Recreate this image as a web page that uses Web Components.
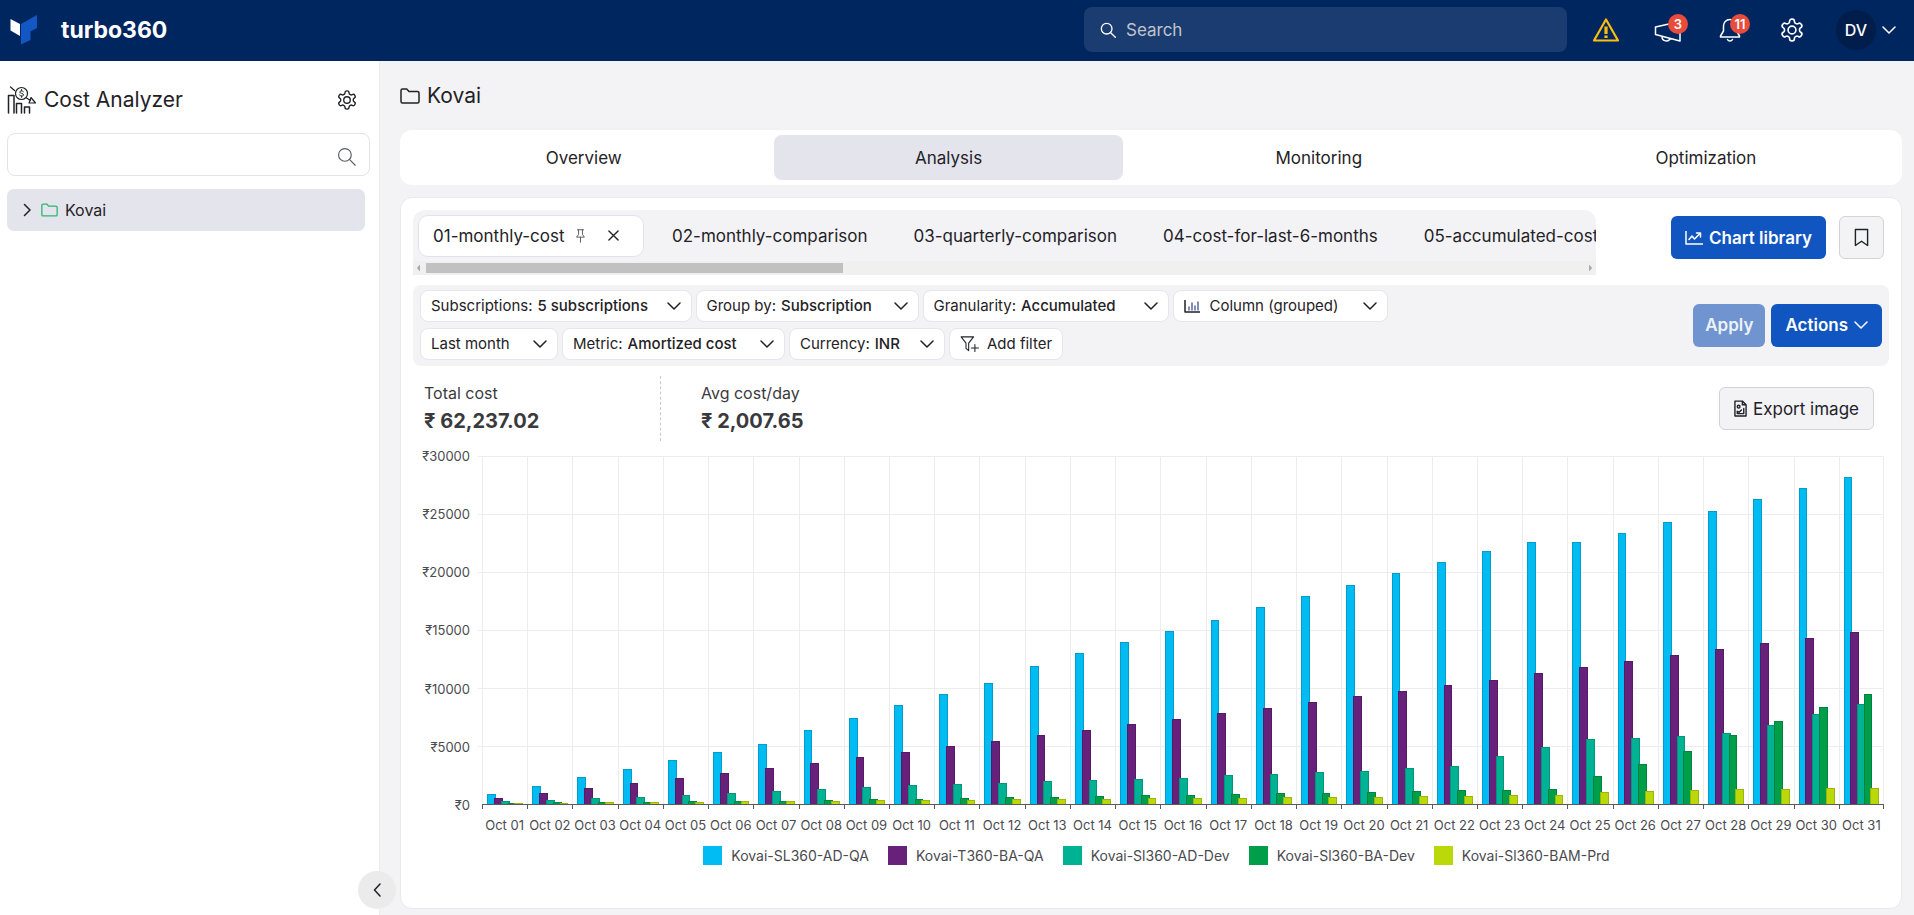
<!DOCTYPE html>
<html lang="en">
<head>
<meta charset="utf-8">
<title>Cost Analyzer - turbo360</title>
<style>
  body {
    margin: 0;
    background: #f3f3f6;
    color: #1f2226;
    font: 16px/24px Inter, "Noto Sans", sans-serif;
  }
</style>
</head>
<body>
<app-shell>
  <top-bar slot="header"></top-bar>
  <side-panel slot="aside"></side-panel>
  <page-heading>Kovai</page-heading>
  <page-tabs></page-tabs>
  <analysis-panel></analysis-panel>
</app-shell>

<script>
/* Base class: renders the markup returned by render() into an open root. */
class BaseElement extends HTMLElement {
  connectedCallback() {
    if (this.shadowRoot) return;
    const root = this.attachShadow({ mode: "open" });
    const template = document.createElement("template");
    template.innerHTML = `<style>
      :host, *, *::before, *::after { box-sizing: border-box; }
      button, input, select { font: inherit; color: inherit; }
      button { border: 0; padding: 0; background: none; cursor: pointer; }
    </style>` + this.render();
    root.append(template.content.cloneNode(true));
  }
}

const ICONS = {
  logo: ["0 0 27 30", `<path d="M.5 4 10 9v12L.5 15.500z" fill="#fff"/><path d="M11 9 27 0v13l-6.500 3.500V25L11 29.500z" fill="#1357c4"/>`],
  search: ["0 0 24 24", `<circle cx="10" cy="10" r="8"/><path d="m16 16 7 7"/>`],
  warning: ["0 0 28 26", `<path d="M14 2.500 26 23.500H2z" stroke="#fdbf0f" stroke-width="2.200"/><path d="M14 9.500v7.500M14 18.500v2.500" stroke="#fdbf0f" stroke-width="3.200" stroke-linecap="butt"/>`],
  megaphone: ["0 0 28 24", `<path d="M1.500 9v7.500L26 23V3.500zM8 18.500c0 5.500 7 5.500 8 2"/>`],
  bell: ["0 0 22 24", `<path d="M11 1.500c-4 0-6.500 3-6.500 6.500v5L1.500 18v1h19v-1l-3-5V8c0-3.500-2.500-6.500-6.500-6.500zM8.500 21.500c1 2 4 2 5 0"/>`],
  gear: ["1 1 22 22", `<path d="M12.22 2h-.44a2 2 0 0 0-2 2v.18a2 2 0 0 1-1 1.730l-.43.25a2 2 0 0 1-2 0l-.15-.08a2 2 0 0 0-2.730.73l-.22.38a2 2 0 0 0 .73 2.730l.15.1a2 2 0 0 1 1 1.720v.51a2 2 0 0 1-1 1.740l-.15.09a2 2 0 0 0-.73 2.730l.22.38a2 2 0 0 0 2.730.73l.15-.08a2 2 0 0 1 2 0l.43.25a2 2 0 0 1 1 1.730V20a2 2 0 0 0 2 2h.44a2 2 0 0 0 2-2v-.18a2 2 0 0 1 1-1.730l.43-.25a2 2 0 0 1 2 0l.15.08a2 2 0 0 0 2.730-.73l.22-.39a2 2 0 0 0-.73-2.730l-.15-.08a2 2 0 0 1-1-1.740v-.5a2 2 0 0 1 1-1.740l.15-.09a2 2 0 0 0 .73-2.730l-.22-.38a2 2 0 0 0-2.730-.73l-.15.08a2 2 0 0 1-2 0l-.43-.25a2 2 0 0 1-1-1.730V4a2 2 0 0 0-2-2z"/><circle cx="12" cy="12" r="3.600"/>`],
  down: ["0 0 14 8", `<path d="m1 1 6 6 6-6"/>`],
  right: ["0 0 8 14", `<path d="m1.500 1.500 5.500 5.500-5.500 5.500"/>`],
  left: ["0 0 8 14", `<path d="M7 1 1.500 7 7 13"/>`],
  folder: ["0 0 20 16", `<path d="M1 13.500v-11C1 1.500 1.500 1 2.500 1h4.200L9 3.500h8.500c1 0 1.500.5 1.500 1.500v8.500c0 1-.5 1.500-1.500 1.500h-15c-1 0-1.500-.5-1.500-1.500z"/>`],
  cost: ["0 0 30 28", `<path d="M1.500 27V9.500h5.500V27M9.500 27V17.500h5V27M17.500 27v-6h5v6"/><path d="M20.500 7.500a6 6 0 1 1-12 0 6 6 0 0 1 12 0zM3.500 1l4 3.500M19.500 12l4 2.500M24 11.500l4.500 5.500h-6.500z" stroke-width="1.200"/><path d="M16.500 5.700c-.6-1.200-3.800-1.200-3.800.4 0 1.500 3.900 1.100 3.900 2.800 0 1.500-3.500 1.500-4.100.2M14.600 3.500v1M14.600 10.200v1.200" stroke-width="1"/>`],
  pin: ["0 0 14 18", `<path d="M3 1h8M4.500 1v6L2 10.500h10L9.500 7V1M7 10.500V17"/>`],
  close: ["0 0 12 12", `<path d="m1 1 10 10M11 1 1 11"/>`],
  trend: ["0 0 18 14", `<path d="M1 0v13h17M4 8.500l3-3.500 2.500 3L15 2.500M11.500 2H15.500v4"/>`],
  bookmark: ["0 0 16 20", `<path d="M1.500 1.500h13v17L8 14l-6.500 4.500z"/>`],
  bars: ["0 0 16 13", `<path d="M1 0v12h15"/><path d="M5 10V7M8 10V3M11 10V6M14 10V2" stroke="#5c6a9a"/>`],
  filter: ["0 0 22 18", `<path d="M1 1h14l-5.500 7v8.500L6.500 14V8zM12.500 13.500h8M16.500 9.500v8"/>`],
  image: ["0 0 14 18", `<path d="M1 1h8l4 4v12H1zM9 1v4h4"/><path d="M6.500 7a1.500 1.500 0 1 1-3 0 1.500 1.500 0 0 1 3 0zM3.500 14.500v-2.500l2 1 2.500-2.500M10.500 9v5.500h-7"/>`]
};

/* <app-icon name="..."> sized by --w / --h, coloured by currentColor. */
customElements.define("app-icon", class extends BaseElement {
  render() {
    const [box, shape] = ICONS[this.getAttribute("name")];
    const [, , w, h] = box.split(" ");
    return `<style>
      :host { display: inline-block; flex: none; width: var(--w, ${w}px); height: var(--h, ${h}px); }
      svg { display: block; width: 100%; height: 100%; fill: none; stroke: currentColor;
            stroke-width: var(--stroke, 1.500); stroke-linejoin: round; stroke-linecap: round; }
      svg [fill^="#"] { stroke: none; }
    </style><svg viewBox="${box}" aria-hidden="true">${shape}</svg>`;
  }
});

customElements.define("app-shell", class extends BaseElement {
  render() {
    return `<style>
      :host { display: flex; flex-direction: column; min-height: 100vh; }
      .body { flex: 1; display: flex; }
      main { flex: 1; min-width: 0; display: flex; flex-direction: column; padding: 0 12px 6px 20px; }
    </style>
    <slot name="header"></slot>
    <div class="body"><slot name="aside"></slot><main><slot></slot></main></div>`;
  }
});

/* Icon button in the top bar, with an optional count. */
customElements.define("bar-action", class extends BaseElement {
  render() {
    const count = this.getAttribute("count");
    return `<style>
      :host { display: block; width: 62px; }
      button { position: relative; display: grid; place-items: center; width: 100%; height: 44px; }
      span { position: absolute; left: 50%; top: 6px; width: 20px; height: 20px; border-radius: 50%;
             background: #e94b3c; color: #fff; font-size: 13px; line-height: 20px; font-weight: 600; text-align: center; }
    </style>
    <button aria-label="${this.getAttribute("label")}"><slot></slot>${count ? `<span>${count}</span>` : ""}</button>`;
  }
});

customElements.define("top-bar", class extends BaseElement {
  render() {
    return `<style>
      :host { display: block; background: #002660; color: #fff; }
      header { display: flex; align-items: center; height: 61px; padding: 0 18px 2px 10px; }
      .brand { display: flex; align-items: center; gap: 24px; color: inherit; text-decoration: none;
               font-size: 23px; font-weight: 700; }
      .search { flex: 0 1 483px; height: 45px; margin: 0 8px 0 auto; padding: 0 16px; display: flex; align-items: center;
                gap: 8px; border-radius: 8px; background: #1b3c70; }
      .search app-icon { --w: 16px; --h: 16px; --stroke: 2; }
      input { flex: 1; min-width: 0; border: 0; outline: 0; background: none; font-size: 17px; }
      input::placeholder { color: #c0c4cc; opacity: 1; }
      .gear { --w: 24px; --h: 24px; }
      .user { display: flex; align-items: center; gap: 6px; margin-left: 13px; font-weight: 500; }
      .user span { width: 40px; height: 40px; border-radius: 50%; line-height: 40px; background: #001d4c; text-align: center; }
    </style>
    <header>
      <a class="brand" href="#"><app-icon name="logo"></app-icon>turbo360</a>
      <label class="search"><app-icon name="search"></app-icon><input type="text" placeholder="Search" aria-label="Search"></label>
      <bar-action label="Warnings"><app-icon name="warning"></app-icon></bar-action>
      <bar-action label="Announcements" count="3"><app-icon name="megaphone"></app-icon></bar-action>
      <bar-action label="Notifications" count="11"><app-icon name="bell"></app-icon></bar-action>
      <bar-action label="Settings"><app-icon class="gear" name="gear"></app-icon></bar-action>
      <button class="user"><span>DV</span><app-icon name="down"></app-icon></button>
    </header>`;
  }
});

customElements.define("side-panel", class extends BaseElement {
  render() {
    return `<style>
      :host { display: block; position: relative; flex: none; width: 380px; padding: 20px 9px 0 7px;
              background: #fff; border-right: 1px solid #ececef; }
      .title { display: flex; align-items: center; gap: 7px; height: 38px; padding-right: 13px; }
      h1 { flex: 1; margin: 0; font-size: 21px; line-height: 28px; font-weight: 400; }
      .title button { display: grid; }
      .title button app-icon { --w: 20px; --h: 20px; }
      .search { display: flex; align-items: center; height: 43px; margin-top: 14px; padding: 4px 13px 0; border: 1px solid #e4e4e8; border-radius: 8px; }
      .search app-icon { --w: 19px; --h: 19px; color: #5b5f66; }
      input { flex: 1; min-width: 0; border: 0; outline: 0; background: none; }
      .node { display: flex; align-items: center; gap: 7px; width: 358px; max-width: 100%; height: 42px; margin-top: 13px; padding: 0 16px;
              border-radius: 7px; background: #e4e4ec; }
      .folder { --w: 17px; --h: 14px; color: #2cb56e; margin-left: 3px; }
      .toggle { position: absolute; right: -17px; bottom: 6px; width: 38px; height: 38px; border-radius: 50%;
                display: grid; place-items: center; background: #ebebeb; }
    </style>
    <div class="title"><app-icon name="cost"></app-icon><h1>Cost Analyzer</h1>
      <button aria-label="Cost Analyzer settings"><app-icon name="gear"></app-icon></button></div>
    <label class="search"><input type="text" aria-label="Filter folders"><app-icon name="search"></app-icon></label>
    <button class="node"><app-icon name="right"></app-icon><app-icon class="folder" name="folder"></app-icon>Kovai</button>
    <button class="toggle" aria-label="Collapse sidebar"><app-icon name="left"></app-icon></button>`;
  }
});

customElements.define("page-heading", class extends BaseElement {
  render() {
    return `<style>
      :host { display: flex; align-items: center; gap: 7px; height: 69px; }
      h2 { margin: 0; font-size: 21px; line-height: 28px; font-weight: 400; }
    </style><app-icon name="folder"></app-icon><h2><slot></slot></h2>`;
  }
});

customElements.define("page-tabs", class extends BaseElement {
  render() {
    const tabs = ["Overview", "Analysis", "Monitoring", "Optimization"];
    return `<style>
      :host { display: block; }
      nav { display: flex; gap: 12px; padding: 5px; border-radius: 12px; background: #fff; }
      a { flex: 1 1 auto; height: 45px; border-radius: 8px; color: inherit; text-decoration: none; text-align: center;
          font-size: 17px; line-height: 46px; }
      [aria-current] { background: #e4e4ec; }
    </style><nav>${tabs.map(t => `<a href="#"${t === "Analysis" ? ' aria-current="page"' : ""}>${t}</a>`).join("")}</nav>`;
  }
});

/* Button with an optional leading and trailing icon; kind = primary | muted | plain. */
customElements.define("app-button", class extends BaseElement {
  render() {
    return `<style>
      :host { display: block; flex: none; }
      button { display: flex; align-items: center; justify-content: center; gap: 6px; width: 100%; height: 43px; padding: 0 14px;
               border-radius: 6px; font-size: 17px; white-space: nowrap; }
      .primary { background: #1155c0; color: #fff; font-weight: 600; }
      .muted { padding: 0 12px; background: #7094cf; color: #eef2fa; font-weight: 600; }
      .plain { background: #f3f3f6; border: 1px solid #d4d4d8; }
    </style><button class="${this.getAttribute("kind")}" ${this.hasAttribute("label") ? `aria-label="${this.getAttribute("label")}"` : ""}><slot></slot></button>`;
  }
});

customElements.define("view-tabs", class extends BaseElement {
  render() {
    return `<style>
      :host { display: block; min-width: 0; border-radius: 12px 12px 0 0; background: #f3f3f6; overflow: hidden; }
      .tabs { display: flex; align-items: center; gap: 46px; height: 51px; padding: 0 5px; font-size: 17px; overflow: hidden; }
      .tabs > * { flex: none; white-space: nowrap; }
      .active { display: flex; align-items: center; width: 226px; height: 42px; margin-right: -18px; padding: 0 14px;
                border: 1px solid #e2e2ec; border-radius: 10px; background: #fff; }
      .active app-icon { display: block; }
      .active .pin { margin-left: 10px; color: #555; --w: 11px; --h: 14px; --stroke: 1.200; }
      .active .close { margin-left: 22px; --w: 11px; --h: 11px; }
      .bar { display: flex; align-items: center; justify-content: space-between; height: 14px; padding: 0 4px; background: #f0f0f0; }
      .track { flex: 1; margin: 0 6px; }
      .thumb { width: 36%; height: 10px; background: #c1c1c1; }
      .arrow { width: 3px; height: 7px; background: #a8a8a8; clip-path: polygon(0 50%, 100% 0, 100% 100%); }
      .arrow.next { clip-path: polygon(0 0, 100% 50%, 0 100%); }
    </style>
    <div class="tabs">
      <div class="active"><button>01-monthly-cost</button><button class="pin" aria-label="Pin"><app-icon name="pin"></app-icon></button>
        <button class="close" aria-label="Close"><app-icon name="close"></app-icon></button></div>
      <button>02-monthly-comparison</button><button>03-quarterly-comparison</button>
      <button>04-cost-for-last-6-months</button><button>05-accumulated-cost</button>
    </div>
    <div class="bar"><i class="arrow"></i><div class="track"><div class="thumb"></div></div><i class="arrow next"></i></div>`;
  }
});

/* Drop-down filter: label text, then the chosen value in a select. */
customElements.define("filter-chip", class extends BaseElement {
  render() {
    const label = this.getAttribute("label"), icon = this.getAttribute("icon"), value = this.getAttribute("value");
    return `<style>
      :host { display: block; height: 32px; }
      label { display: flex; align-items: center; height: 100%; padding: 0 10px; border: 1px solid #e6e6ea; border-radius: 8px;
              background: #fff; font-size: 15px; white-space: nowrap; }
      label > app-icon { margin-right: 10px; }
      select { flex: 1; appearance: none; border: 0; outline: 0; padding: 0 18px 0 0; background: none; font-weight: ${label ? 500 : 400}; }
      .name { margin-right: 5px; }
      label > app-icon.down { margin: 0; }
    </style>
    <label>${icon ? `<app-icon name="${icon}"></app-icon>` : ""}${label ? `<span class="name">${label}:</span>` : ""}
      <select aria-label="${label || value}"><option>${value}</option></select><app-icon class="down" name="down"></app-icon></label>`;
  }
});

customElements.define("filter-bar", class extends BaseElement {
  render() {
    return `<style>
      :host { display: flex; align-items: center; gap: 6px; padding: 5px 7px 6px; border-radius: 8px; background: #f3f3f6; }
      .chips { flex: 0 1 1000px; display: flex; flex-wrap: wrap; gap: 6px 4px; margin-right: auto; }
      .add { display: flex; align-items: center; gap: 7px; height: 32px; padding: 0 10px; border: 1px solid #e6e6ea; border-radius: 8px;
             background: #fff; font-size: 15px; }
      .add app-icon { --w: 20px; --h: 16px; --stroke: 1.200; }
      .xl { min-width: 271px; } .l { min-width: 246px; } .m { min-width: 223px; } .c { min-width: 215px; } .s { min-width: 156px; } .xs { min-width: 138px; }
    </style>
    <div class="chips">
      <filter-chip class="xl" label="Subscriptions" value="5 subscriptions"></filter-chip>
      <filter-chip class="m" label="Group by" value="Subscription"></filter-chip>
      <filter-chip class="l" label="Granularity" value="Accumulated"></filter-chip>
      <filter-chip class="c" icon="bars" value="Column (grouped)"></filter-chip>
      <filter-chip class="xs" value="Last month"></filter-chip>
      <filter-chip class="m" label="Metric" value="Amortized cost"></filter-chip>
      <filter-chip class="s" label="Currency" value="INR"></filter-chip>
      <button class="add"><app-icon name="filter"></app-icon>Add filter</button>
    </div>
    <app-button kind="muted">Apply</app-button>
    <app-button kind="primary">Actions<app-icon name="down"></app-icon></app-button>`;
  }
});

customElements.define("cost-stat", class extends BaseElement {
  render() {
    return `<style>
      :host { display: block; padding-top: 5px; color: #3a3a3e; }
      span { display: block; font-size: 16px; line-height: 24px; }
      strong { display: block; font-size: 20px; line-height: 32px; }
    </style><span>${this.getAttribute("label")}</span><strong><slot></slot></strong>`;
  }
});

/* Bar heights in chart units: 1046 units span the axis from 0 to 30000. */
const UNITS = 1046;
const SERIES = [
  ["Kovai-SL360-AD-QA", "#00bcf2", [29,55,81,106,131,156,181,222,258,298,332,365,416,454,487,521,554,592,624,657,695,728,761,788,788,816,849,882,916,950,983]],
  ["Kovai-T360-BA-QA", "#68217a", [19,34,48,63,78,94,107,124,141,157,174,190,207,223,240,257,273,290,306,324,340,357,374,393,411,430,448,465,483,500,518]],
  ["Kovai-Sl360-AD-Dev", "#00b294", [8,12,18,22,27,32,38,45,52,57,61,64,68,71,75,79,87,91,96,100,108,114,144,171,194,198,203,215,238,270,302]],
  ["Kovai-Sl360-BA-Dev", "#009e49", [4,5,6,7,8,9,10,12,14,16,18,20,22,24,26,28,30,32,34,36,38,41,43,46,83,121,159,207,249,291,332]],
  ["Kovai-Sl360-BAM-Prd", "#bad80a", [3,4,5,6,7,8,9,10,11,11,12,14,15,16,17,18,19,20,21,22,24,25,27,28,36,39,42,44,46,47,49]]
];

customElements.define("cost-chart", class extends BaseElement {
  render() {
    const days = SERIES[0][2].map((_, i) => i);
    const ticks = [30000, 25000, 20000, 15000, 10000, 5000, 0];
    const bars = d => SERIES.map(([, color, v]) => `<i style="height:${(v[d] / UNITS * 100).toFixed(2)}%;background-color:${color}"></i>`).join("");
    return `<style>
      :host { display: grid; grid-template: minmax(300px, 1fr) auto auto / 57px 1fr; column-gap: 12px; color: #4b4b4f; font-size: 13px; line-height: 18px; }
      .y { display: flex; flex-direction: column; justify-content: space-between; margin: -9px 0; text-align: right; }
      .plot { display: grid; border-bottom: 1px solid #5a5a5e; }
      .plot > * { grid-area: 1 / 1; }
      .lines { display: flex; flex-direction: column; margin-left: -4px; }
      .lines i { flex: 1; border-top: 1px solid #ededee; }
      .days, .x { display: grid; grid-template-columns: repeat(31, minmax(0, 1fr)); }
      .day { position: relative; display: flex; align-items: flex-end; padding: 0 4px 0 6px; border-left: 1px solid #ededee; }
      .day:last-child { border-right: 1px solid #ededee; }
      .day i { flex: 1; margin-left: -2px; border: 1px solid rgba(0, 0, 0, .16); border-bottom: 0; }
      .day::after, .day:last-child::before { content: ""; position: absolute; left: -1px; top: 100%; width: 1px; height: 5px; background: #5a5a5e; }
      .day:last-child::before { left: auto; right: -1px; }
      .x { grid-column: 2; padding-top: 11px; }
      .x span { display: flex; justify-content: center; white-space: nowrap; }
      ul { grid-column: 1 / -1; display: flex; flex-wrap: wrap; justify-content: center; gap: 19px; margin: 12px 0 0; padding: 0 0 0 16px;
           list-style: none; font-size: 14px; line-height: 19px; }
      li { display: flex; gap: 9px; }
      li i { width: 19px; height: 19px; }
    </style>
    <div class="y">${ticks.map(t => `<span>₹${t}</span>`).join("")}</div>
    <div class="plot">
      <div class="lines">${ticks.slice(1).map(() => "<i></i>").join("")}</div>
      <div class="days">${days.map(d => `<div class="day">${bars(d)}</div>`).join("")}</div>
    </div>
    <div class="x">${days.map(d => `<span>Oct ${String(d + 1).padStart(2, "0")}</span>`).join("")}</div>
    <ul>${SERIES.map(([name, color]) => `<li><i style="background:${color}"></i>${name}</li>`).join("")}</ul>`;
  }
});

customElements.define("analysis-panel", class extends BaseElement {
  render() {
    return `<style>
      :host { flex: 1; display: flex; flex-direction: column; margin-top: 12px; padding: 12px 12px 43px;
              border: 1px solid #e9e9ed; border-radius: 12px; background: #fff; }
      .views { display: flex; align-items: center; gap: 13px; height: 65px; padding-right: 5px; }
      .views app-button { margin-bottom: 10px; }
      view-tabs { flex: 1; margin-right: 62px; }
      .lib { --w: 18px; --h: 14px; }
      .mark { --h: 19px; --w: 15px; }
      filter-bar { margin-top: 10px; }
      .stats { display: flex; align-items: center; height: 65px; margin-top: 10px; padding: 0 15px 0 11px; }
      cost-stat { align-self: stretch; }
      .total { width: 237px; margin-right: 40px; border-right: 1px dashed #c9c9cd; }
      .export { margin-left: auto; }
      .export app-icon { --w: 13px; --h: 17px; }
      cost-chart { flex: 1; margin: 15px 5px 0 0; }
    </style>
    <div class="views">
      <view-tabs></view-tabs>
      <app-button kind="primary"><app-icon class="lib" name="trend"></app-icon>Chart library</app-button>
      <app-button kind="plain" label="Bookmark"><app-icon class="mark" name="bookmark"></app-icon></app-button>
    </div>
    <filter-bar></filter-bar>
    <div class="stats">
      <cost-stat class="total" label="Total cost">₹ 62,237.02</cost-stat>
      <cost-stat label="Avg cost/day">₹ 2,007.65</cost-stat>
      <app-button class="export" kind="plain"><app-icon name="image"></app-icon>Export image</app-button>
    </div>
    <cost-chart></cost-chart>`;
  }
});
</script>
</body>
</html>
